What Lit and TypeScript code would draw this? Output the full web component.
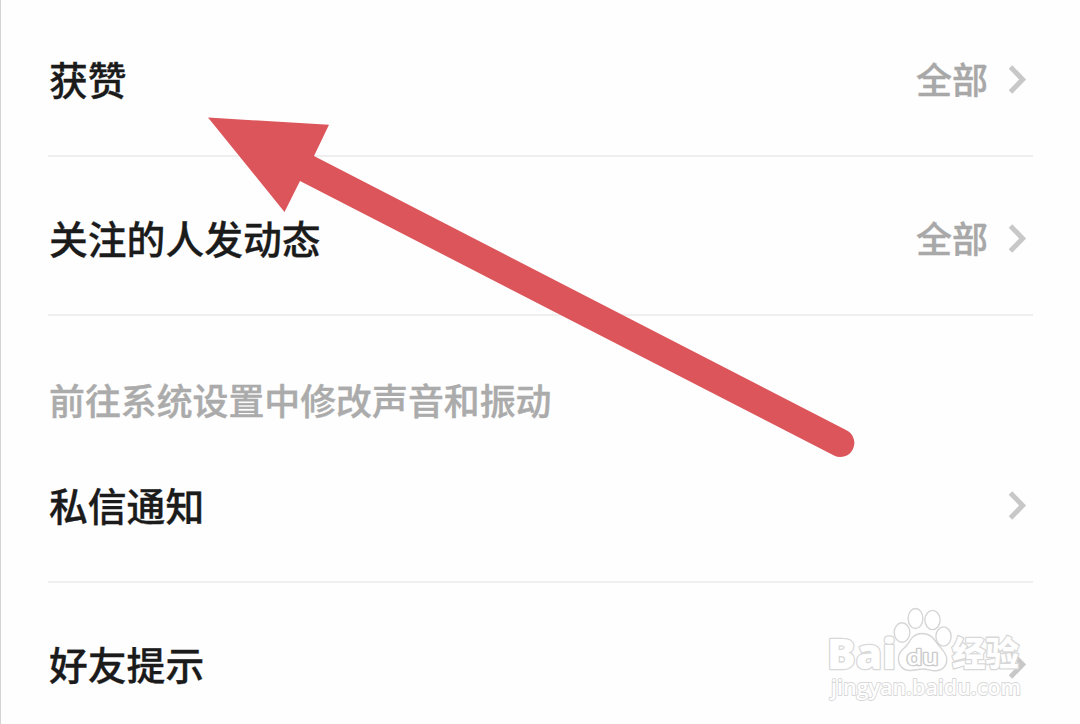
import { html, css, svg, nothing, LitElement } from 'lit';
import { customElement, property } from 'lit/decorators.js';

interface Setting {
  label: string;
  value?: string;
}

const interactions: Setting[] = [
  { label: '获赞', value: '全部' },
  { label: '关注的人发动态', value: '全部' },
];

const messages: Setting[] = [{ label: '私信通知' }, { label: '好友提示' }];

@customElement('setting-row')
export class SettingRow extends LitElement {
  static styles = css`
    :host {
      display: flex;
      align-items: flex-end;
      box-sizing: border-box;
      height: 159px;
      padding-bottom: 48px;
      border-bottom: 2px solid #efefef;
    }

    .label {
      flex: 1;
      padding: 0 0 2px 1px;
      font-size: 38.8px;
      font-weight: 500;
      line-height: 54px;
      color: #1b1b1b;
      -webkit-text-stroke: 0.3px #1b1b1b;
    }

    .value {
      margin-right: 20px;
      padding-bottom: 2px;
      font-size: 36px;
      font-weight: 500;
      line-height: 54px;
      color: #a8a8a8;
      -webkit-text-stroke: 0.4px #a8a8a8;
    }

    .chevron {
      width: 20px;
      height: 32px;
      margin: 0 5px 11px 0;
      fill: none;
      stroke: #c8c8c8;
      stroke-width: 5;
    }
  `;

  @property() label = '';

  @property() value?: string;

  render() {
    return html`
      <span class="label">${this.label}</span>
      ${this.value ? html`<span class="value">${this.value}</span>` : nothing}
      <svg class="chevron" viewBox="0 0 20 32">
        <path d="M2.500 3 L14.600 15.500 L2.500 28" />
      </svg>
    `;
  }
}

@customElement('site-watermark')
export class SiteWatermark extends LitElement {
  static styles = css`
    :host {
      display: block;
    }

    svg {
      display: block;
      width: 210px;
      height: 104px;
    }

    .outline {
      fill: #fff;
      stroke: #d8d8d8;
      stroke-width: 2.6;
      paint-order: stroke;
      stroke-linejoin: round;
    }

    .paw {
      fill: #fff;
      stroke: #d6d6d6;
      stroke-width: 1.4;
    }

    .brand {
      font: 800 43px 'Open Sans', sans-serif;
    }

    .du {
      font: 600 21px 'Open Sans', sans-serif;
      stroke: #ccc;
    }

    .cjk {
      font: 900 34px 'Noto Sans CJK SC', sans-serif;
    }

    .url {
      font: 600 22px 'Open Sans', sans-serif;
      stroke-width: 1.8;
    }
  `;

  render() {
    const toes = [
      [82, 32.5, 7.8, 9.8],
      [95.5, 18.5, 7.4, 10],
      [112.5, 20, 7.6, 9.6],
      [123.5, 36.5, 7.6, 9.6],
    ];

    return html`
      <svg viewBox="0 0 210 104">
        <text class="outline brand" x="7" y="68.500" textLength="69" lengthAdjust="spacingAndGlyphs">Bai</text>
        ${toes.map(
          ([cx, cy, rx, ry]) =>
            svg`<ellipse class="paw" cx=${cx} cy=${cy} rx=${rx} ry=${ry} />`,
        )}
        <path
          class="paw"
          d="M102 33.5 C94 33.5 91 39 87.500 44.500 C83.500 49.500 78.500 51 78.500 59 C78.500 66 83.500 70.500 90 70.500 C95 70.500 98 69 103 69 C108 69 110 70.800 115.500 70.800 C122.500 70.800 126.800 66 126.800 59.500 C126.800 52.500 122 50 118 44.500 C114 39 111 33.500 102 33.500 Z"
        />
        <text class="outline du" x="86.500" y="64.500" textLength="32" lengthAdjust="spacingAndGlyphs">du</text>
        <text class="outline cjk" x="132" y="66" textLength="67" lengthAdjust="spacingAndGlyphs">经验</text>
        <text class="outline url" x="11" y="94.500" textLength="190" lengthAdjust="spacingAndGlyphs">jingyan.baidu.com</text>
      </svg>
    `;
  }
}

@customElement('app-root')
export class AppRoot extends LitElement {
  static styles = css`
    :host {
      display: block;
      position: relative;
      box-sizing: border-box;
      height: 724px;
      overflow: hidden;
      padding: 0 47px 0 48px;
      border-left: 1px solid #d4d4d4;
      background: #fefefe;
      font-family: 'Noto Sans CJK SC', sans-serif;
    }

    .list {
      margin: -2px 0 0 -1px;
    }

    .hint {
      padding: 56px 0 3px 1px;
      font-size: 35.9px;
      font-weight: 500;
      line-height: 54px;
      color: #ababab;
      -webkit-text-stroke: 0.4px #ababab;
    }

    .messages {
      margin-top: -5px;
    }

    .arrow {
      position: absolute;
      top: 0;
      left: -1px;
      width: 1080px;
      height: 724px;
      fill: #dc555b;
      pointer-events: none;
    }

    .watermark {
      position: absolute;
      top: 600px;
      left: 819px;
    }
  `;

  private __rows(settings: Setting[]) {
    return settings.map(
      s => html`<setting-row .label=${s.label} .value=${s.value}></setting-row>`,
    );
  }

  render() {
    return html`
      <div class="list">
        ${this.__rows(interactions)}
        <div class="hint">前往系统设置中修改声音和振动</div>
        <div class="messages">${this.__rows(messages)}</div>
      </div>
      <svg class="arrow" viewBox="0 0 1080 724">
        <path
          d="M208 117.500 L329 124.800 L314 156 L846.500 430.300 A13.800 13.800 0 0 1 834 455.500 L300 181 L284.500 212 Z"
        />
      </svg>
      <site-watermark class="watermark"></site-watermark>
    `;
  }
}
